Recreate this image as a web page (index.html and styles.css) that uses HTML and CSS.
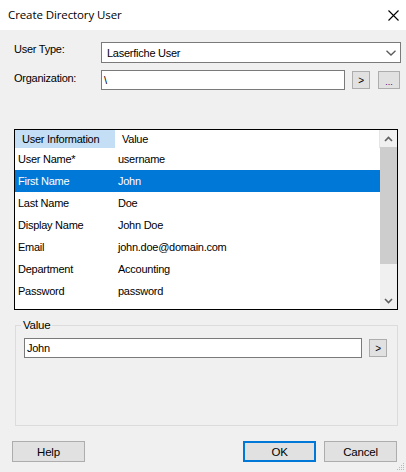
FILE: index.html
```html
<!DOCTYPE html>
<html>
<head>
<meta charset="utf-8">
<link rel="stylesheet" href="styles.css">
</head>
<body>
<div class="window">
  <div class="titlebar">
    <span class="title">Create Directory User</span>
    <svg class="close" width="11" height="11" viewBox="0 0 11 11"><path d="M0.5 0.5L10.5 10.5M10.5 0.5L0.5 10.5" stroke="#000" stroke-width="1.1" fill="none"/></svg>
  </div>
  <div class="content">
    <div class="row r1">
      <span class="lbl">User Type:</span>
      <div class="combo">
        <span class="combo-text">Laserfiche User</span>
        <svg class="chev" width="10" height="6" viewBox="0 0 10 6"><path d="M0.5 0.8L5 5L9.5 0.8" stroke="#5a5a5a" stroke-width="1.3" fill="none"/></svg>
      </div>
    </div>
    <div class="row r2">
      <span class="lbl">Organization:</span>
      <div class="textbox org">\</div>
      <button class="btn small">&gt;</button>
      <button class="btn dots">...</button>
    </div>
    <div class="grid">
      <div class="list">
        <div class="hdr">
          <div class="hc1">User Information</div>
          <div class="hc2">Value</div>
        </div>
        <div class="item"><div class="c1">User Name*</div><div class="c2">username</div></div>
        <div class="item sel"><div class="c1">First Name</div><div class="c2">John</div></div>
        <div class="item"><div class="c1">Last Name</div><div class="c2">Doe</div></div>
        <div class="item"><div class="c1">Display Name</div><div class="c2">John Doe</div></div>
        <div class="item"><div class="c1">Email</div><div class="c2">john.doe@domain.com</div></div>
        <div class="item"><div class="c1">Department</div><div class="c2">Accounting</div></div>
        <div class="item"><div class="c1">Password</div><div class="c2">password</div></div>
      </div>
      <div class="vscroll">
        <div class="arrow"><svg width="9" height="6" viewBox="0 0 9 6"><path d="M1 5L4.5 1.5L8 5" stroke="#606060" stroke-width="1.6" fill="none"/></svg></div>
        <div class="thumb"></div>
        <div class="track"></div>
        <div class="arrow"><svg width="9" height="6" viewBox="0 0 9 6"><path d="M1 1L4.5 4.5L8 1" stroke="#606060" stroke-width="1.6" fill="none"/></svg></div>
      </div>
    </div>
    <fieldset class="group">
      <legend>Value</legend>
      <div class="vrow">
        <div class="textbox val">John</div>
        <button class="btn small">&gt;</button>
      </div>
    </fieldset>
    <div class="footer">
      <button class="btn fbtn help">Help</button>
      <div class="spacer"></div>
      <button class="btn fbtn ok">OK</button>
      <button class="btn fbtn cancel">Cancel</button>
    </div>
    <svg class="grip" width="8" height="8" viewBox="0 0 8 8"><g fill="#b8b8b8"><rect x="6" y="0" width="1" height="1"/><rect x="4" y="2" width="1" height="1"/><rect x="6" y="2" width="1" height="1"/><rect x="2" y="4" width="1" height="1"/><rect x="4" y="4" width="1" height="1"/><rect x="6" y="4" width="1" height="1"/><rect x="0" y="6" width="1" height="1"/><rect x="2" y="6" width="1" height="1"/><rect x="4" y="6" width="1" height="1"/><rect x="6" y="6" width="1" height="1"/></g></svg>
  </div>
</div>
</body>
</html>
```
FILE: styles.css
```css
* { box-sizing: border-box; }
html, body { margin: 0; padding: 0; }
body {
  width: 406px;
  height: 472px;
  overflow: hidden;
  font-family: "Liberation Sans", Arial, sans-serif;
  font-size: 11px;
  letter-spacing: -0.25px;
  color: #000;
  background: #f0f0f0;
}
.window { width: 406px; height: 472px; display: flex; flex-direction: column; }
.titlebar {
  height: 30px;
  background: #fff;
  display: flex;
  align-items: center;
  justify-content: space-between;
  padding: 0 7px 0 8px;
}
.title {
  font-family: "Open Sans", "Noto Sans", sans-serif;
  font-size: 11.5px;
  color: #000;
  letter-spacing: -0.1px;
  margin-top: -1px;
}
.close { margin-top: 0px; }
.content {
  position: relative;
  flex: 1;
  background: #f0f0f0;
  padding-top: 12px;
  display: flex;
  flex-direction: column;
}
.row { display: flex; align-items: flex-start; }
.lbl { width: 87px; margin-left: 14px; line-height: 13px; padding-top: 1px; }
.r1 { height: 21px; }
.r2 { height: 20px; margin-top: 7px; }
.r2 .lbl { padding-top: 2px; }
.combo {
  width: 300px;
  height: 21px;
  background: #fff;
  border: 1px solid #7a7a7a;
  display: flex;
  align-items: center;
  justify-content: space-between;
  padding: 0 4px 0 5px;
}
.combo-text { line-height: 13px; padding-top: 1px; }
.chev { margin-top: 1px; }
.textbox {
  height: 20px;
  background: #fff;
  border: 1px solid #7a7a7a;
  display: flex;
  align-items: center;
  padding-left: 2px;
  line-height: 13px;
}
.org { width: 244px; }
.btn {
  font-family: "Liberation Sans", Arial, sans-serif;
  font-size: 11px;
  letter-spacing: -0.2px;
  color: #000;
  background: #e1e1e1;
  border: 1px solid #adadad;
  padding: 0;
  margin: 0;
  display: flex;
  align-items: center;
  justify-content: center;
}
.small { width: 18px; height: 18px; margin-left: 7px; margin-top: 1px; font-size: 10px; }
.dots { width: 22px; height: 18px; margin-left: 8px; margin-top: 1px; color: #400080; font-size: 9px; padding-top: 3px; letter-spacing: 0; }

.grid {
  margin-top: 39px;
  margin-left: 14px;
  width: 384px;
  height: 181px;
  border: 1px solid #000;
  background: #fff;
  display: flex;
}
.list { flex: 1; display: flex; flex-direction: column; }
.hdr { height: 18px; display: flex; border-right: 1px solid #e5e5e5; }
.hc1 {
  width: 100px;
  background: #c4dff5;
  padding-left: 7px;
  line-height: 18px;
}
.hc2 { flex: 1; padding-left: 7px; line-height: 18px; }
.item { height: 22px; display: flex; align-items: center; line-height: 13px; }
.c1 { width: 102px; padding-left: 3px; }
.c2 { flex: 1; padding-left: 1px; }
.sel { background: #0078d7; color: #fff; }
.vscroll { width: 17px; display: flex; flex-direction: column; background: #f0f0f0; }
.arrow { height: 17px; display: flex; align-items: center; justify-content: center; }
.thumb { height: 117px; background: #cdcdcd; }
.track { flex: 1; }

.group {
  margin: 9px 0 0 15px;
  width: 383px;
  border: 1px solid #dcdcdc;
  padding: 6px 0 0 8px;
  min-width: 0;
}
.group legend {
  padding: 0 2px;
  margin-left: -3px;
  line-height: 13px;
  font-size: 11.5px;
}
.vrow { height: 87px; display: flex; align-items: flex-start; }
.val { width: 338px; }

.footer { display: flex; margin-top: 15px; padding: 0 9px 0 12px; }
.spacer { flex: 1; }
.fbtn { width: 73px; height: 21px; font-size: 11.5px; }
.ok { border: 2px solid #0078d7; }
.cancel { margin-left: 8px; }
.grip { position: absolute; right: 1px; bottom: 1px; }
```
